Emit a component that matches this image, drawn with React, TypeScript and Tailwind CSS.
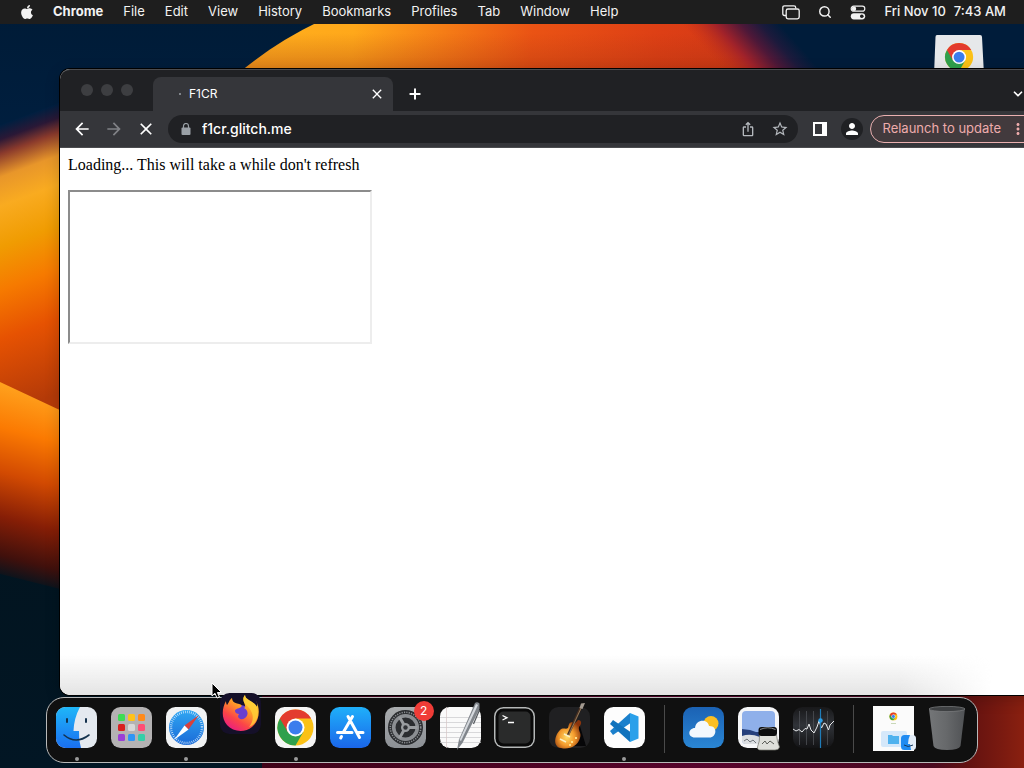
import type { ReactNode } from "react";
import { FaApple } from "react-icons/fa";
import {
  MdArrowBack,
  MdArrowForward,
  MdClose,
  MdIosShare,
  MdMoreVert,
  MdPerson,
  MdStarBorder,
} from "react-icons/md";
import { ChevronDown, Plus, Search } from "lucide-react";

const MENUS = ["File", "Edit", "View", "History", "Bookmarks", "Profiles", "Tab", "Window", "Help"];

const LAUNCHPAD_COLORS = [
  "#3ddc54", "#ffc21a", "#ff8a1a",
  "#d92020", "#d8d8d8", "#ff4d74",
  "#9a3fd6", "#2f95f5", "#34cfa8",
];

function Wallpaper() {
  return (
    <svg
      aria-hidden="true"
      className="absolute inset-0 h-full w-full"
      viewBox="0 0 1024 768"
      preserveAspectRatio="none"
    >
      <defs>
        <linearGradient id="sky" x1="0" y1="0" x2="0" y2="1">
          <stop offset="0" stopColor="#001b36" />
          <stop offset="0.2" stopColor="#001f40" />
          <stop offset="0.65" stopColor="#02141f" />
          <stop offset="1" stopColor="#021624" />
        </linearGradient>
        <linearGradient id="arc" gradientUnits="userSpaceOnUse" x1="244" y1="0" x2="800" y2="40">
          <stop offset="0" stopColor="#ffb01e" />
          <stop offset="0.2" stopColor="#ffa81a" />
          <stop offset="0.36" stopColor="#f57d16" />
          <stop offset="0.52" stopColor="#ea5314" />
          <stop offset="0.75" stopColor="#dd3f15" />
          <stop offset="1" stopColor="#cf3518" />
        </linearGradient>
        <linearGradient id="arcShade" gradientUnits="userSpaceOnUse" x1="0" y1="24" x2="0" y2="69">
          <stop offset="0.2" stopColor="#a03010" stopOpacity="0" />
          <stop offset="1" stopColor="#a03010" stopOpacity="0.35" />
        </linearGradient>
        <linearGradient id="arcFade" gradientUnits="userSpaceOnUse" x1="700" y1="45" x2="755" y2="-4">
          <stop offset="0" stopColor="#c43018" stopOpacity="0" />
          <stop offset="0.35" stopColor="#a0222a" />
          <stop offset="0.6" stopColor="#4e1838" />
          <stop offset="0.8" stopColor="#1c1a3c" />
          <stop offset="1" stopColor="#001c3a" />
        </linearGradient>
        <linearGradient id="petalTop" gradientUnits="userSpaceOnUse" x1="0" y1="125" x2="95" y2="380">
          <stop offset="0" stopColor="#001f40" />
          <stop offset="0.05" stopColor="#2a1836" />
          <stop offset="0.1" stopColor="#8a3a2c" />
          <stop offset="0.18" stopColor="#e8962a" />
          <stop offset="0.28" stopColor="#f9ab20" />
          <stop offset="0.42" stopColor="#f09c02" />
          <stop offset="0.57" stopColor="#f67a00" />
          <stop offset="0.74" stopColor="#e65202" />
          <stop offset="1" stopColor="#b43a08" />
        </linearGradient>
        <linearGradient id="petalLow" gradientUnits="userSpaceOnUse" x1="30" y1="392" x2="-17" y2="574">
          <stop offset="0" stopColor="#ffa01c" />
          <stop offset="0.22" stopColor="#fb7a02" />
          <stop offset="0.45" stopColor="#d24a02" />
          <stop offset="0.68" stopColor="#861e06" />
          <stop offset="0.88" stopColor="#40100c" />
          <stop offset="1" stopColor="#02141f" />
        </linearGradient>
        <linearGradient id="ground" x1="0" y1="0" x2="1" y2="0">
          <stop offset="0" stopColor="#400218" />
          <stop offset="0.6" stopColor="#58042c" />
          <stop offset="0.88" stopColor="#4a0a20" />
          <stop offset="0.93" stopColor="#641210" />
          <stop offset="1" stopColor="#8a2010" />
        </linearGradient>
      </defs>
      <rect width="1024" height="768" fill="url(#sky)" />
      <path d="M240 72 Q276 42 318 22 H860 V72Z" fill="url(#arc)" />
      <path d="M240 72 Q276 42 318 22 H860 V72Z" fill="url(#arcShade)" />
      <rect x="600" width="424" height="120" fill="url(#arcFade)" />
      <path d="M0 125 L64 101 V414 L0 383Z" fill="url(#petalTop)" />
      <path d="M0 382 L64 412 V590 L0 574Z" fill="url(#petalLow)" />
      <rect x="262" y="690" width="762" height="78" fill="url(#ground)" />
    </svg>
  );
}

function ChromeLogo() {
  return (
    <g>
      <circle cx="20" cy="20" r="18" fill="#fbc116" />
      <path d="M20 20 L4.4 11 A18 18 0 0 0 20 38 L27.8 24.5Z" fill="#2fa04c" />
      <path d="M4.4 11 A18 18 0 0 1 35.6 11 H20 L12.2 24.5Z" fill="#e33b2e" />
      <circle cx="20" cy="20" r="9" fill="#fff" />
      <circle cx="20" cy="20" r="7" fill="#3b7ded" />
    </g>
  );
}

function Tile({ fill, children }: { fill: string; children?: ReactNode }) {
  return (
    <svg aria-hidden="true" viewBox="0 0 41 41" className="size-[41px] overflow-visible">
      <rect width="41" height="41" rx="9.5" fill={fill} />
      {children}
    </svg>
  );
}

function FinderIcon() {
  return (
    <Tile fill="#e4e9ef">
      <defs>
        <linearGradient id="finder" x1="0" y1="0" x2="0" y2="1">
          <stop offset="0" stopColor="#1fb6f8" />
          <stop offset="1" stopColor="#1a6ff0" />
        </linearGradient>
      </defs>
      <path d="M9.5 0 H24 Q18 11 17.5 24 H23 Q22.5 33 25 41 H9.5 A9.5 9.5 0 0 1 0 31.5 V9.5 A9.5 9.5 0 0 1 9.5 0Z" fill="url(#finder)" />
      <path d="M11 12 V15 M30 12 V15" stroke="#14324d" strokeWidth="2" strokeLinecap="round" />
      <path d="M8 28 Q20 38 33 28" fill="none" stroke="#14324d" strokeWidth="1.6" strokeLinecap="round" />
    </Tile>
  );
}

function LaunchpadIcon() {
  return (
    <Tile fill="#b4b2b3">
      {LAUNCHPAD_COLORS.map((color, i) => (
        <rect
          key={color}
          x={7 + (i % 3) * 10}
          y={7 + Math.floor(i / 3) * 10}
          width="7"
          height="7"
          rx="1.5"
          fill={color}
        />
      ))}
    </Tile>
  );
}

function SafariIcon() {
  return (
    <Tile fill="#f1f2f3">
      <defs>
        <linearGradient id="safari" x1="0" y1="0" x2="0" y2="1">
          <stop offset="0" stopColor="#2fa6f2" />
          <stop offset="1" stopColor="#1b6bd8" />
        </linearGradient>
      </defs>
      <circle cx="20.5" cy="20.5" r="17.5" fill="url(#safari)" />
      <circle cx="20.5" cy="20.5" r="15.5" fill="none" stroke="#d5eafc" strokeWidth="2.4" strokeDasharray="0.7 1.33" />
      <path d="M33 8 L22.5 22.5 L18.5 18.5Z" fill="#d8403c" />
      <path d="M8 33 L22.5 22.5 L18.5 18.5Z" fill="#fff" />
    </Tile>
  );
}

function FirefoxIcon() {
  return (
    <Tile fill="#151029">
      <defs>
        <linearGradient id="fox" x1="0.85" y1="0" x2="0.2" y2="1">
          <stop offset="0" stopColor="#ffe03a" />
          <stop offset="0.4" stopColor="#ff9a28" />
          <stop offset="0.7" stopColor="#fb4548" />
          <stop offset="1" stopColor="#e8188a" />
        </linearGradient>
      </defs>
      <circle cx="21" cy="21" r="9" fill="#6a3fd0" />
      <path
        d="M25 2 C25 7 34 8 37 14 C37.5 11 37 9 36 8 C41 17 39 28 32 34 C25 40 13 39 7 32 C1 25 2 15 6 8 C6 10 6.5 11 7 12 C9 10 9 7 12 5 C12 8 14 10 17 10.5 C21 11 22 12 21.5 13.5 C20 16 15 15 15 18 C15 20 17 21 19 21 C16 25 21 28 25 25 C29 22 28 17 24 15 C28 13 20 7 25 2Z"
        fill="url(#fox)"
      />
      <path d="M25 2 C25 7 34 8 37 14 C40 24 35 32 29 34 C34 28 34 21 29 15 C25 11 21 8 25 2Z" fill="#ffd338" opacity="0.75" />
    </Tile>
  );
}

function ChromeIcon() {
  return (
    <Tile fill="#f5f5f5">
      <g transform="translate(0.5 0.5)">
        <ChromeLogo />
      </g>
    </Tile>
  );
}

function AppStoreIcon() {
  return (
    <Tile fill="url(#store)">
      <defs>
        <linearGradient id="store" x1="0" y1="0" x2="0" y2="1">
          <stop offset="0" stopColor="#1fb0fa" />
          <stop offset="1" stopColor="#1a66ea" />
        </linearGradient>
      </defs>
      <path
        d="M22.5 9.5 L13.5 25 M18 9.5 L29.5 30.5 M7.5 25.5 H22 M27.5 25.5 H33 M11.5 29.5 L10.7 31"
        stroke="#fff"
        strokeWidth="3"
        strokeLinecap="round"
      />
    </Tile>
  );
}

function SettingsIcon() {
  return (
    <Tile fill="url(#prefs)">
      <defs>
        <linearGradient id="prefs" x1="0" y1="0" x2="0" y2="1">
          <stop offset="0" stopColor="#a9acae" />
          <stop offset="1" stopColor="#8c9095" />
        </linearGradient>
      </defs>
      <circle cx="20.5" cy="20.5" r="17.5" fill="#2b2d30" />
      <circle cx="20.5" cy="20.5" r="15.2" fill="none" stroke="#8b8e92" strokeWidth="1.6" strokeDasharray="1.2 1.2" />
      <circle cx="20.5" cy="20.5" r="11.8" fill="none" stroke="#8b8e92" strokeWidth="3.6" />
      <path d="M20.5 20.5 L14.5 10 M20.5 20.5 H32.5 M20.5 20.5 L14.5 31" stroke="#9a9da0" strokeWidth="3" />
      <circle cx="20.5" cy="20.5" r="4.5" fill="#9a9da0" />
      <circle cx="20.5" cy="20.5" r="2.2" fill="#303236" />
    </Tile>
  );
}

function TextEditIcon() {
  return (
    <Tile fill="#fafafa">
      <path d="M0 10.5 H41 M0 15.5 H41 M0 20.5 H41 M0 25.5 H41 M0 30.5 H41 M0 35.5 H41" stroke="#c9c9cb" strokeWidth="0.7" />
      <path d="M6.5 0 V41" stroke="#d5c5c5" strokeWidth="0.7" />
      <path d="M35 -4 Q37 -5.5 39.5 -3.5 L39.5 2 L22.5 36 L17 43 L19 32.5Z" fill="#80858b" />
      <path d="M36 -3 L38 -2 L21 34 L19.5 33Z" fill="#d5d9de" />
      <path d="M39.5 3 L33.5 17" stroke="#54585d" strokeWidth="1.2" />
    </Tile>
  );
}

function TerminalIcon() {
  return (
    <Tile fill="#b5b8b8">
      <rect x="1.5" y="1.5" width="38" height="38" rx="8" fill="#090909" />
      <rect x="4.5" y="4.5" width="32" height="32" rx="5" fill="#2a2b2b" />
      <path d="M8.5 8.5 L13 10.8 L8.5 13 M14 15.5 H20" fill="none" stroke="#fff" strokeWidth="1.3" />
    </Tile>
  );
}

function GarageBandIcon() {
  return (
    <Tile fill="#202022">
      <defs>
        <radialGradient id="guitar" cx="0.45" cy="0.6" r="0.6">
          <stop offset="0" stopColor="#ffdc68" />
          <stop offset="0.5" stopColor="#f39a2c" />
          <stop offset="1" stopColor="#8a340c" />
        </radialGradient>
      </defs>
      <path d="M30 16 L37 39 H24Z" fill="#060608" />
      <path
        d="M11 23 C14 20 17 23 19 21 C20 19 19 16 23 15 C25 17 27 16 29 13 C33 13 33 17 30 20 C29 24 33 26 31 31 C29 39 20 43 12 41 C4 40 5 29 11 23Z"
        fill="url(#guitar)"
      />
      <path d="M19 28 L32 0" stroke="#4a3020" strokeWidth="2.4" />
      <path d="M19.6 28 L32.6 0" stroke="#a08a6a" strokeWidth="0.8" />
      <path d="M30.5 1 L32 -3.5 L36 -4 L33.5 2Z" fill="#a39a90" />
      <path d="M15 27 L21 30 M11 32 L17 35" stroke="#fbf0c4" strokeWidth="1.6" />
      <circle cx="23" cy="35" r="1.1" fill="#fff0a0" />
      <circle cx="27" cy="31" r="1.1" fill="#fff0a0" />
      <circle cx="21" cy="38" r="1" fill="#fff0a0" />
    </Tile>
  );
}

function VsCodeIcon() {
  return (
    <Tile fill="#fdfdfd">
      <path d="M26 6 L6 24 L9 28 L28 15Z" fill="#1b80cc" />
      <path d="M26 35 L6 17 L9 13 L28 26Z" fill="#1173bd" />
      <path d="M26 6 L34.5 9.5 V31.5 L26 35Z" fill="#2aa0ea" />
    </Tile>
  );
}

function WeatherIcon() {
  return (
    <Tile fill="url(#weather)">
      <defs>
        <linearGradient id="weather" x1="0" y1="0" x2="0" y2="1">
          <stop offset="0" stopColor="#1b62b4" />
          <stop offset="1" stopColor="#2a86d4" />
        </linearGradient>
      </defs>
      <circle cx="28" cy="16.5" r="7.5" fill="#fcbf22" />
      <path d="M12 30.5 C4 30.5 5 21 12 21 C13 11.5 25 12 26 19 C35 18.5 34 30.5 26.5 30.5Z" fill="#f3f8fd" />
    </Tile>
  );
}

function PreviewIcon() {
  return (
    <Tile fill="#f5f6f8">
      <rect x="4" y="4" width="33" height="33" rx="4" fill="#8fb0ea" />
      <path d="M4 22 L12 23 L18 25 H37 V31 H4Z" fill="#26407c" />
      <path d="M4 29 Q12 26 22 30 V37 H8 Q4 37 4 33Z" fill="#dcdfe2" />
      <path d="M6 34 L9 32 L12 35 L15 33 L18 36" stroke="#6f757b" fill="none" />
      <path d="M21.5 28 H38.5 Q39 34 41.5 40 Q41 43 37 43 H23 Q19 43 19.5 40 Q22 34 21.5 28Z" fill="#dedfda" stroke="#75776f" strokeWidth="0.7" />
      <path d="M24 37 L27 34 L29 37 L32 34 L36 37" stroke="#5b5d58" fill="none" />
      <rect x="20.5" y="20" width="18.5" height="9" rx="3" fill="#0c0d0e" />
      <path d="M22 22.5 Q30 19 37.5 22.5" stroke="#8b8e90" fill="none" />
    </Tile>
  );
}

function StocksIcon() {
  return (
    <Tile fill="url(#stocks)">
      <defs>
        <linearGradient id="stocks" x1="0" y1="0" x2="0" y2="1">
          <stop offset="0" stopColor="#18181a" />
          <stop offset="0.45" stopColor="#303338" />
          <stop offset="1" stopColor="#131315" />
        </linearGradient>
      </defs>
      <path d="M6.5 4 V38 M13.5 4 V38 M20.5 4 V38 M34.5 4 V38" stroke="#4c4f54" strokeWidth="0.8" />
      <path d="M0 22 L3 24 L6 22.5 L9 25 L12 21.5 L14 22 L16 17 L18 23 L21 26 L24 20 L26 14 L28.5 21 L31 16 L33 17 L35.5 23 L37 18 L41 14" fill="none" stroke="#e6e8ea" strokeWidth="1" />
      <path d="M27.5 2 V41" stroke="#1f7cb8" strokeWidth="1.2" />
      <circle cx="27.5" cy="13.5" r="2.2" fill="#2e9fe6" />
    </Tile>
  );
}

function InstallerWindowIcon() {
  return (
    <svg aria-hidden="true" viewBox="0 0 41 46" className="h-[46px] w-[41px] overflow-visible">
      <rect width="41" height="45" fill="#fbfbfb" />
      <g transform="translate(16 6) scale(0.22)">
        <ChromeLogo />
      </g>
      <path d="M18 17.5 H23" stroke="#c9d8b8" />
      <rect x="8" y="25" width="26" height="16" rx="2" fill="#d5e8fa" />
      <path d="M15 29 H19 L20 30 H26 V38 H15Z" fill="#4fb2ee" />
      <rect x="28" y="29" width="15" height="15" rx="3.5" fill="#e3edf8" />
      <path d="M31.5 29 H37 Q35 33 35 38 H37 L38 44 H31.5 Q28 44 28 40.5 V32.5 Q28 29 31.5 29Z" fill="#1f8bf2" />
      <path d="M31 39 Q35 42 40 39" stroke="#17395c" fill="none" />
    </svg>
  );
}

function TrashIcon() {
  return (
    <svg aria-hidden="true" viewBox="0 0 41 46" className="h-[46px] w-[41px]">
      <defs>
        <linearGradient id="bin" x1="0" y1="0" x2="1" y2="0">
          <stop offset="0" stopColor="#747678" />
          <stop offset="0.5" stopColor="#66686a" />
          <stop offset="1" stopColor="#505255" />
        </linearGradient>
      </defs>
      <path d="M2 3 L6.5 40 Q8 44 20 44 Q32 44 33.5 40 L38 3Z" fill="url(#bin)" />
      <ellipse cx="20" cy="3" rx="18" ry="2.6" fill="#3e4042" stroke="#77797b" strokeWidth="0.8" />
    </svg>
  );
}

type DockApp = {
  name: string;
  icon: ReactNode;
  running?: boolean;
  bouncing?: boolean;
  badge?: string;
};

const APPS: DockApp[] = [
  { name: "Finder", icon: <FinderIcon />, running: true },
  { name: "Launchpad", icon: <LaunchpadIcon /> },
  { name: "Safari", icon: <SafariIcon />, running: true },
  { name: "Firefox", icon: <FirefoxIcon />, bouncing: true },
  { name: "Chrome", icon: <ChromeIcon />, running: true },
  { name: "App Store", icon: <AppStoreIcon /> },
  { name: "System Settings", icon: <SettingsIcon />, badge: "2" },
  { name: "TextEdit", icon: <TextEditIcon /> },
  { name: "Terminal", icon: <TerminalIcon /> },
  { name: "GarageBand", icon: <GarageBandIcon /> },
  { name: "Visual Studio Code", icon: <VsCodeIcon />, running: true },
];

const RECENTS: DockApp[] = [
  { name: "Weather", icon: <WeatherIcon /> },
  { name: "Preview", icon: <PreviewIcon /> },
  { name: "Stocks", icon: <StocksIcon /> },
];

const STACKS: DockApp[] = [
  { name: "Google Chrome installer", icon: <InstallerWindowIcon /> },
  { name: "Trash", icon: <TrashIcon /> },
];

function DockButton({ app }: { app: DockApp }) {
  return (
    <button aria-label={app.name} className="relative block">
      <span className={app.bouncing ? "block -translate-y-3.5" : "block"}>{app.icon}</span>
      {app.badge && (
        <span className="absolute -top-1.5 -right-2 flex size-5 items-center justify-center rounded-full bg-[#f03c37] text-xs text-white">
          {app.badge}
        </span>
      )}
      {app.running && (
        <span className="absolute right-0 -bottom-[13px] left-0 mx-auto size-1 rounded-full bg-[#9b9b9b]" />
      )}
    </button>
  );
}

function Dock() {
  return (
    <nav
      aria-label="Dock"
      className="absolute bottom-[5px] left-1/2 flex h-[66px] -translate-x-1/2 items-center rounded-[18px] border border-[#b9b9b9] bg-[#101010] px-[9px] pb-1.5"
    >
      <div className="flex w-[589px] justify-between">
        {APPS.map((app) => (
          <DockButton key={app.name} app={app} />
        ))}
      </div>
      <div className="mt-1 mr-[18px] ml-[19px] h-12 w-px bg-[#4a4a4a]" />
      <div className="flex gap-3.5">
        {RECENTS.map((app) => (
          <DockButton key={app.name} app={app} />
        ))}
      </div>
      <div className="mx-[19px] mt-1 h-12 w-px bg-[#4a4a4a]" />
      <div className="mt-1 flex gap-[13px]">
        {STACKS.map((app) => (
          <DockButton key={app.name} app={app} />
        ))}
      </div>
    </nav>
  );
}

function MenuBar() {
  return (
    <header className="relative flex h-6 items-center bg-[#1e1e1e] pr-[18px] pl-[19px] text-[13px] text-[#f2f2f2]">
      <button aria-label="Apple menu">
        <FaApple className="size-4" />
      </button>
      <nav className="ml-[18px] flex gap-5">
        <button className="font-bold">Chrome</button>
        {MENUS.map((menu) => (
          <button key={menu}>{menu}</button>
        ))}
      </nav>
      <div className="ml-auto flex items-center gap-[18px] font-medium">
        <button aria-label="Screen sharing">
          <svg viewBox="0 0 18 15" className="h-[15px] w-[18px]" fill="none" stroke="currentColor" strokeWidth="1.3">
            <path d="M4 10.5 H2.5 Q0.8 10.5 0.8 8.8 V2.5 Q0.8 0.8 2.5 0.8 H12 Q13.7 0.8 13.7 2.5 V3.5" />
            <rect x="4.2" y="4" width="13" height="9.8" rx="1.8" />
          </svg>
        </button>
        <button aria-label="Spotlight">
          <Search className="size-3.5" strokeWidth={2.5} />
        </button>
        <button aria-label="Control Center">
          <svg viewBox="0 0 16 15" className="h-[15px] w-4">
            <rect x="1.2" y="1.2" width="13.6" height="5" rx="2.5" fill="none" stroke="currentColor" strokeWidth="1.2" />
            <circle cx="4" cy="3.7" r="2.2" fill="currentColor" />
            <rect x="0.8" y="8.2" width="14.4" height="6.2" rx="3.1" fill="currentColor" />
            <circle cx="11.8" cy="11.3" r="1.8" fill="#1e1e1e" />
          </svg>
        </button>
        <span className="flex gap-2">
          <span>Fri Nov 10</span>
          <span>7:43 AM</span>
        </span>
      </div>
    </header>
  );
}

function TabStrip() {
  return (
    <div className="flex h-[42px] rounded-tl-[10px] border-t border-[#4b4c4f] bg-[#202124] text-white">
      <div className="flex w-[93px] gap-2 pt-[14px] pl-[21px]">
        <span className="size-3 rounded-full bg-[#3d3e41]" />
        <span className="size-3 rounded-full bg-[#3d3e41]" />
        <span className="size-3 rounded-full bg-[#3d3e41]" />
      </div>
      <div className="mt-[7px] flex w-60 items-center rounded-t-lg bg-[#35363a] pr-2 pl-[26px]">
        <span className="size-0.5 rounded-full bg-[#9aa0a6]" />
        <span className="ml-2 text-xs">F1CR</span>
        <button aria-label="Close tab" className="ml-auto">
          <MdClose className="size-4" />
        </button>
      </div>
      <button aria-label="New tab" className="mt-1.5 ml-3.5">
        <Plus className="size-4" strokeWidth={3} />
      </button>
      <button aria-label="Search tabs" className="mt-1.5 mr-[31px] ml-auto">
        <ChevronDown className="size-3.5" strokeWidth={3} />
      </button>
    </div>
  );
}

function Toolbar() {
  return (
    <div className="flex h-[37px] items-center border-b border-[#4b4c4f] bg-[#35363a] pl-3">
      <div className="flex gap-3 text-white">
        <button aria-label="Back">
          <MdArrowBack className="size-5" />
        </button>
        <button aria-label="Forward" className="text-[#808286]">
          <MdArrowForward className="size-5" />
        </button>
        <button aria-label="Stop loading">
          <MdClose className="size-5" />
        </button>
      </div>
      <div className="ml-3 flex h-7 min-w-0 grow items-center rounded-full bg-[#202124] pr-[9px] pl-2 text-[#b4b8bd]">
        <svg aria-hidden="true" viewBox="0 0 10 12" className="ml-[5px] h-3 w-2.5 shrink-0 text-[#9aa0a6]">
          <rect x="0.5" y="4.5" width="9" height="7.5" rx="1" fill="currentColor" />
          <path d="M2.5 5 V3 A2.5 2.5 0 0 1 7.5 3 V5" fill="none" stroke="currentColor" strokeWidth="1.2" />
        </svg>
        <input
          aria-label="Address"
          defaultValue="f1cr.glitch.me"
          className="ml-[11px] min-w-0 grow bg-transparent text-sm font-medium text-white outline-none"
        />
        <button aria-label="Share this page" className="mr-[15px]">
          <MdIosShare className="size-4" />
        </button>
        <button aria-label="Bookmark this tab">
          <MdStarBorder className="size-[18px]" />
        </button>
      </div>
      <button aria-label="Side panel" className="ml-[15px]">
        <svg viewBox="0 0 14 14" className="size-3.5">
          <path d="M0 0 H14 V14 H0Z M2 2 V12 H9 V2Z" fill="#fff" fillRule="evenodd" />
        </svg>
      </button>
      <button
        aria-label="Profile"
        className="ml-3.5 flex size-[22px] items-center justify-center rounded-full bg-[#202124] text-white"
      >
        <MdPerson className="size-[18px]" />
      </button>
      <button className="-mr-2.5 ml-[7px] flex h-7 shrink-0 items-center rounded-full border border-[#eab0b0] bg-[#423a3d] pr-[38px] pl-[11px] text-[13px] text-[#eeacac]">
        Relaunch to update
        <MdMoreVert className="ml-2 size-[18px]" />
      </button>
    </div>
  );
}

function BrowserWindow() {
  return (
    <section
      aria-label="Chrome window"
      className="absolute top-[69px] -right-8 bottom-[73px] left-[60px] flex flex-col rounded-l-[10px] bg-white shadow-[0_0_0_1px_#000,0_4px_16px_rgba(0,0,0,0.2)]"
    >
      <TabStrip />
      <Toolbar />
      <main className="grow rounded-bl-[10px] bg-white p-2 font-['Liberation_Serif',serif] text-base text-black">
        <p className="leading-[18px]">Loading... This will take a while don't refresh</p>
        <div className="mt-4 h-[154px] w-[304px] border-2 border-t-[#8c8c8c] border-r-[#ededed] border-b-[#ededed] border-l-[#8c8c8c]" />
      </main>
      <div className="pointer-events-none absolute right-16 bottom-0 left-0 h-10 rounded-bl-[10px] bg-linear-to-b from-transparent to-[#e4e4e4] mask-r-from-90%" />
    </section>
  );
}

export default function App() {
  return (
    <div className="relative h-screen overflow-hidden bg-[#001b36] font-['Inter',sans-serif]">
      <Wallpaper />
      <MenuBar />
      <svg aria-hidden="true" viewBox="0 0 50 40" className="absolute top-[35px] right-10 h-10 w-[50px]">
        <path d="M3 0 H46 Q48 0 48 2 L50 40 H0 L1.5 2 Q1.5 0 3 0Z" fill="#e6e8ea" />
        <g transform="translate(9.5 6.5) scale(0.78)">
          <ChromeLogo />
        </g>
      </svg>
      <BrowserWindow />
      <Dock />
      <svg aria-hidden="true" viewBox="0 0 12 18" className="absolute top-[682px] left-[211px] h-[18px] w-3">
        <path d="M1 1 V14 L4 11.3 L6 16 L8.4 15 L6.4 10.5 H10.5Z" fill="#000" stroke="#fff" />
      </svg>
    </div>
  );
}
